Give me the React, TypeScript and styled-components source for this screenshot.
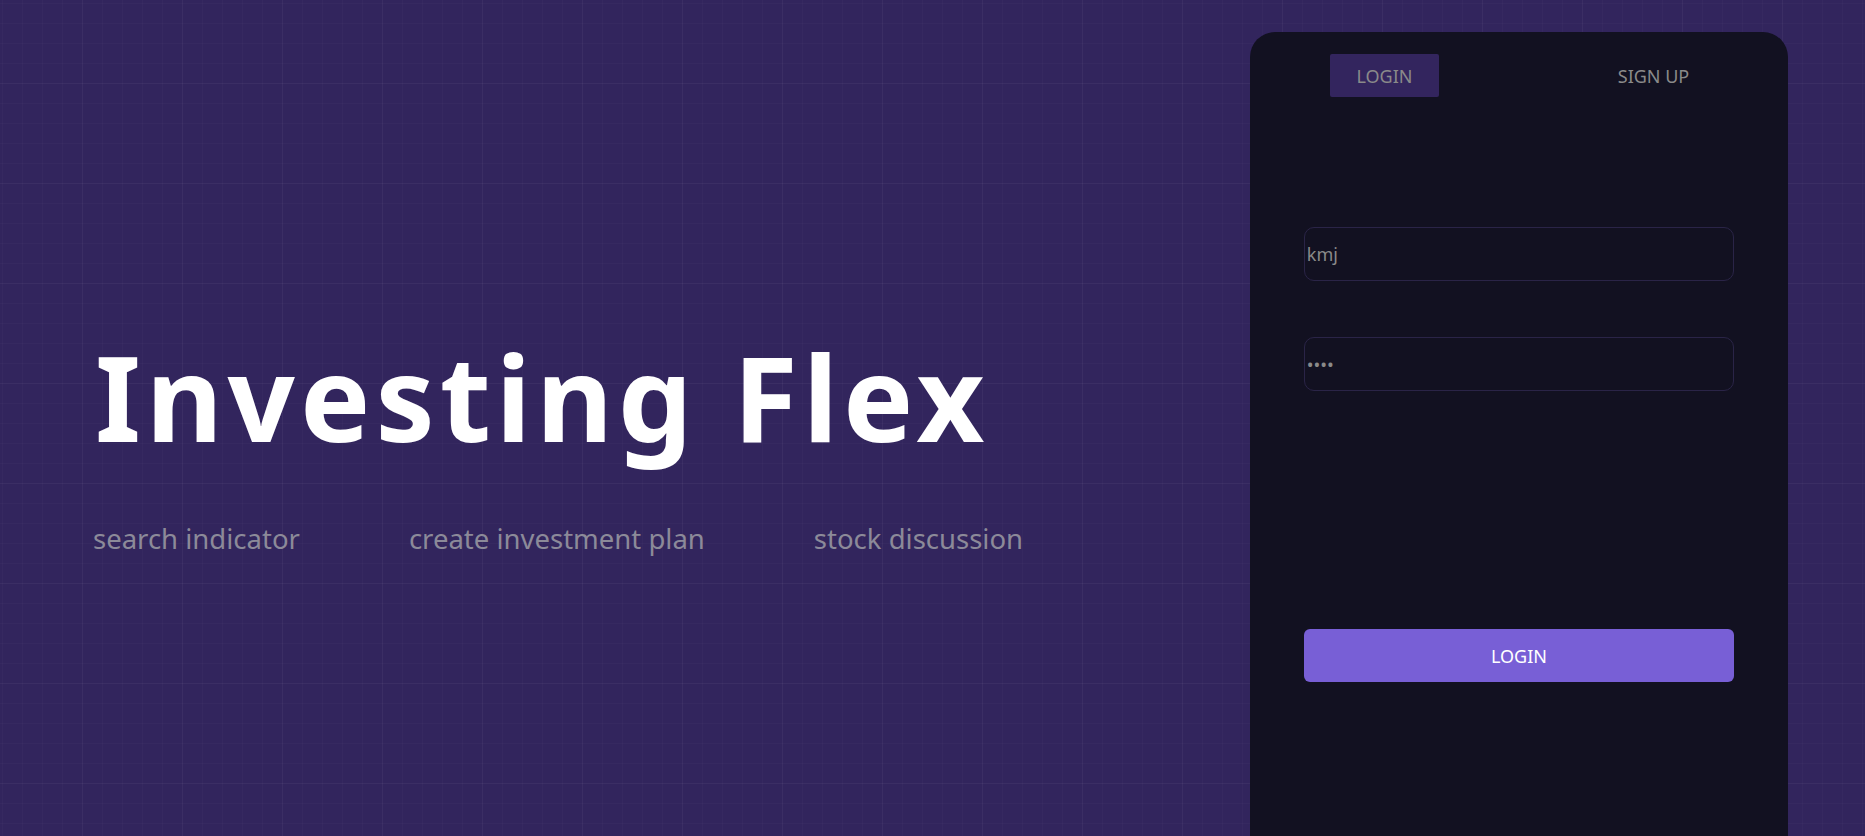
import { FC } from "react";
import styled, { createGlobalStyle } from "styled-components";

const GlobalStyle = createGlobalStyle`
  html, body {
    margin: 0;
    padding: 0;
    background: #32255d;
    font-family: "Noto Sans", "Open Sans", sans-serif;
  }
`;

const features = ["search indicator", "create investment plan", "stock discussion"];

const App: FC = () => {
  return (
    <>
      <GlobalStyle />
      <Page>
        <Hero>
          <Title>Investing Flex</Title>
          <Features>
            {features.map((f) => (
              <Feature key={f}>{f}</Feature>
            ))}
          </Features>
        </Hero>
        <AuthCard>
          <Tabs>
            <TabCell>
              <Tab $active>LOGIN</Tab>
            </TabCell>
            <TabCell>
              <Tab>SIGN UP</Tab>
            </TabCell>
          </Tabs>
          <Form onSubmit={(e) => e.preventDefault()}>
            <Field type="text" defaultValue="kmj" />
            <Field type="password" defaultValue="1234" />
            <SubmitButton type="submit">LOGIN</SubmitButton>
          </Form>
        </AuthCard>
      </Page>
    </>
  );
};

const Page = styled.div`
  display: flex;
  height: 100vh;
  box-sizing: border-box;
  padding: 32px 77px 0 95px;
  overflow: hidden;
  background-color: #32255d;
  background-image:
    linear-gradient(rgba(255, 255, 255, 0.025) 1px, transparent 1px),
    linear-gradient(90deg, rgba(255, 255, 255, 0.025) 1px, transparent 1px),
    linear-gradient(rgba(255, 255, 255, 0.018) 1px, transparent 1px),
    linear-gradient(90deg, rgba(255, 255, 255, 0.018) 1px, transparent 1px);
  background-size: 100px 100px, 100px 100px, 20px 20px, 20px 20px;
  background-position: 82px 83px, 82px 83px, 2px 3px, 2px 3px;
`;

const Hero = styled.section`
  flex: 1;
  padding-top: 294px;
`;

const Title = styled.h1`
  margin: 0;
  color: #ffffff;
  font-size: 118px;
  font-weight: 700;
  line-height: 1.2;
  letter-spacing: 5px;
  white-space: nowrap;
`;

const Features = styled.ul`
  display: flex;
  gap: 109px;
  margin: 52px 0 0 -2px;
  padding: 0;
  list-style: none;
`;

const Feature = styled.li`
  color: #8c8a99;
  font-size: 27.5px;
  white-space: nowrap;
`;

const AuthCard = styled.div`
  width: 538px;
  flex-shrink: 0;
  background: #121121;
  border-radius: 25px 25px 0 0;
`;

const Tabs = styled.div`
  display: grid;
  grid-template-columns: 1fr 1fr;
  padding-top: 22px;
`;

const TabCell = styled.div`
  display: flex;
  justify-content: center;
`;

const Tab = styled.button<{ $active?: boolean }>`
  height: 43px;
  padding: 0 26px;
  border: none;
  border-radius: 2px;
  background: ${({ $active }) => ($active ? "#33255e" : "transparent")};
  color: #8a8a8a;
  font-family: inherit;
  font-size: 18px;
  cursor: pointer;
`;

const Form = styled.form`
  display: flex;
  flex-direction: column;
  align-items: center;
  padding-top: 130px;
`;

const Field = styled.input`
  box-sizing: border-box;
  width: 80%;
  height: 54px;
  margin-bottom: 56px;
  padding: 0 2px;
  border: 1px solid #2a2447;
  border-radius: 10px;
  background: transparent;
  color: #8a8a8a;
  font-family: inherit;
  font-size: 18px;
  outline: none;
`;

const SubmitButton = styled.button`
  width: 80%;
  height: 53px;
  margin-top: 182px;
  border: none;
  border-radius: 6px;
  background: #785fd6;
  color: #ffffff;
  font-family: inherit;
  font-size: 18px;
  cursor: pointer;
`;

export default App;
